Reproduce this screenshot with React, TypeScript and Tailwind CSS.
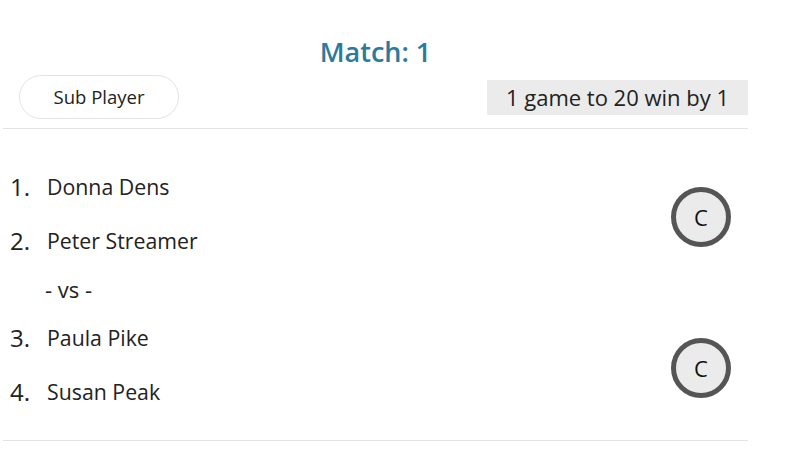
const teams = [
  [
    { n: 1, name: 'Donna Dens' },
    { n: 2, name: 'Peter Streamer' },
  ],
  [
    { n: 3, name: 'Paula Pike' },
    { n: 4, name: 'Susan Peak' },
  ],
];

function Team({ players }: { players: { n: number; name: string }[] }) {
  return (
    <div className="flex items-center">
      <div className="flex-1">
        {players.map((p) => (
          <div key={p.n} className="flex items-center h-[54px]">
            <span className="w-[44px] pl-[7px] text-[24px] text-[#222]">{p.n}.</span>
            <span className="text-[21.3px] text-[#222]">{p.name}</span>
          </div>
        ))}
      </div>
      <div className="mr-[17px] mt-[6px] flex h-[60px] w-[60px] items-center justify-center rounded-full border-[5px] border-[#555] bg-[#ebebeb] text-[22px] text-[#111]">
        C
      </div>
    </div>
  );
}

export default function App() {
  return (
    <div className="min-h-screen bg-white font-['Open_Sans','Noto_Sans',sans-serif]">
      <div className="ml-[3px] w-[745px]">
        <h1 className="pt-[34px] text-center text-[27px] leading-[36px] font-semibold text-[#2d7a9b]">Match: 1</h1>
        <div className="mt-[5px] flex items-center justify-between pb-[9px] border-b border-[#e3e3e3]">
          <button className="ml-[16px] h-[44px] w-[160px] rounded-full border border-[#e3e3e3] bg-white text-[18.5px] text-[#222]">
            Sub Player
          </button>
          <div className="flex h-[35px] w-[261px] items-center justify-center bg-[#ebebeb] text-[22px] text-[#222]">
            1 game to 20 win by 1
          </div>
        </div>
        <div className="pt-[31px] pb-[21px] border-b border-[#e3e3e3]">
          <Team players={teams[0]} />
          <div className="flex h-[43px] items-center pl-[42px] text-[22px] text-[#222]">- vs -</div>
          <Team players={teams[1]} />
        </div>
      </div>
    </div>
  );
}
